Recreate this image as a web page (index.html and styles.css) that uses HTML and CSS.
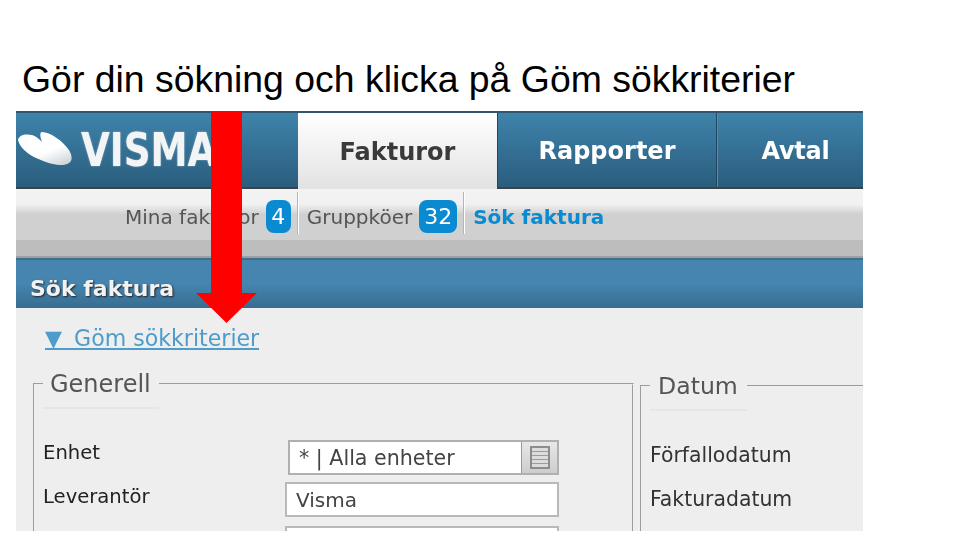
FILE: index.html
```html
<!DOCTYPE html>
<html lang="sv">
<head>
    <meta charset="UTF-8">
    <title>Gör din sökning</title>
    <link rel="stylesheet" href="styles.css">
</head>
<body>
    <h1 class="slide-title">Gör din sökning och klicka på Göm sökkriterier</h1>

    <div class="shot-wrap">
        <div class="shot">
            <div class="topbar">
                <div class="logo">
                    <svg class="logo-mark" width="56" height="40" viewBox="0 0 56 40">
                        <defs>
                            <linearGradient id="mark" x1="0.3" y1="0.2" x2="0.8" y2="1">
                                <stop offset="0.5" stop-color="#fff"/>
                                <stop offset="1" stop-color="#cfd6da"/>
                            </linearGradient>
                        </defs>
                        <path d="M1 10C2 5 8 3.5 15 5C22 7 30 17 34 23C30 19 25 14 24 9C23 5 23 2 25 2C33 2 46 11 52 20C55 25 56 31 52 33C46 37 34 35 19 28C11 24 3 18 1 10Z" fill="url(#mark)"/>
                    </svg>
                    <span class="logo-text">VISMA</span>
                </div>
                <div class="tab tab-active tab-fakturor">Fakturor</div>
                <div class="tab tab-rapporter">Rapporter</div>
                <div class="tab tab-avtal">Avtal</div>
            </div>

            <div class="subnav">
                <div class="subnav-item">Mina fakturor <span class="badge">4</span></div>
                <div class="subnav-item">Gruppköer <span class="badge">32</span></div>
                <div class="subnav-item current">Sök faktura</div>
            </div>
            <div class="band"></div>

            <div class="page-title">Sök faktura</div>

            <div class="content">
                <a class="toggle"><span class="toggle-mark">▼</span> Göm sökkriterier</a>
                <div class="columns">
                    <fieldset class="group group-general">
                        <legend>Generell</legend>
                        <div class="row row-first">
                            <label>Enhet</label>
                            <div class="picker">
                                <span class="picker-value">* | Alla enheter</span>
                                <span class="picker-btn">
                                    <svg width="20" height="23" viewBox="0 0 20 23">
                                        <rect x="1" y="1" width="18" height="21" fill="#dcdcdc" stroke="#8c8c8c" stroke-width="2"/>
                                        <path d="M2 5.5H18M2 9.5H18M2 13.5H18M2 17.5H18" stroke="#9a9a9a" stroke-width="1"/>
                                    </svg>
                                </span>
                            </div>
                        </div>
                        <div class="row">
                            <label>Leverantör</label>
                            <div class="field">Visma</div>
                        </div>
                        <div class="row">
                            <label></label>
                            <div class="field"></div>
                        </div>
                    </fieldset>
                    <fieldset class="group group-date">
                        <legend>Datum</legend>
                        <div class="date-row date-first">Förfallodatum</div>
                        <div class="date-row">Fakturadatum</div>
                    </fieldset>
                </div>
            </div>
        </div>

        <svg class="arrow" width="64" height="215" viewBox="0 0 64 215">
            <path d="M16 1H47V183H62L31.5 213L1 183H16Z" fill="#ff0000"/>
        </svg>
    </div>
</body>
</html>
```

FILE: styles.css
```css
body {
    margin: 0;
    background-color: #fff;
    font-family: "DejaVu Sans", sans-serif;
    overflow: hidden;
}
.slide-title {
    margin: 0;
    height: 111px;
    padding: 58px 0 0 22px;
    box-sizing: border-box;
    font-family: "Liberation Sans", sans-serif;
    font-size: 37.4px;
    line-height: 42px;
    font-weight: normal;
    color: #000;
}
.shot-wrap {
    position: relative;
    margin-left: 16px;
    width: 847px;
    height: 420px;
}
.shot {
    width: 847px;
    height: 420px;
    overflow: hidden;
    background-color: #eee;
    filter: blur(0.35px);
}

.topbar {
    display: flex;
    height: 78px;
    box-sizing: border-box;
    border-top: 2px solid #2f566e;
    border-bottom: 2px solid #3b4347;
    background: linear-gradient(#3f83aa, #2a5d7e);
}
.logo {
    display: flex;
    align-items: center;
    width: 282px;
    padding-left: 1px;
    box-sizing: border-box;
    overflow: hidden;
}
.logo-text {
    margin-left: 8px;
    font-family: "DejaVu Sans Condensed", "DejaVu Sans", sans-serif;
    font-size: 46px;
    line-height: 50px;
    font-weight: bold;
    color: #f2f4f5;
    text-shadow: 0 0 2px rgba(255, 255, 255, 0.5);
    transform: scaleX(0.9);
    transform-origin: left center;
}
.tab {
    display: flex;
    align-items: center;
    justify-content: center;
    padding-top: 2px;
    box-sizing: border-box;
    font-size: 24px;
    font-weight: bold;
    color: #fff;
}
.tab-active {
    margin-bottom: -2px;
    background: linear-gradient(#fff, #e2e2e2);
    color: #3a3a3a;
}
.tab-fakturor {
    width: 199px;
}
.tab-rapporter {
    width: 220px;
    border-left: 1px solid #24465c;
    border-right: 1px solid #24465c;
}
.tab-avtal {
    width: 146px;
    padding-left: 10px;
    border-left: 1px solid #4f8fb5;
    letter-spacing: -0.3px;
}

.subnav {
    display: flex;
    align-items: flex-start;
    height: 51px;
    padding: 3px 0 0 109px;
    box-sizing: border-box;
    background: linear-gradient(#f3f3f3 0, #f1f1f1 30%, #d0d0d0 50%, #d0d0d0 100%);
}
.subnav-item {
    display: flex;
    align-items: center;
    gap: 7px;
    height: 42px;
    padding: 7px 6px 0 0;
    margin-right: 9px;
    box-sizing: border-box;
    border-right: 1px solid #b5b5b5;
    box-shadow: 1px 0 0 #fff;
    font-size: 20px;
    color: #555;
    white-space: nowrap;
}
.subnav-item.current {
    border: 0;
    box-shadow: none;
    font-weight: bold;
    color: #0a8ad0;
}
.badge {
    display: inline-block;
    min-width: 15px;
    padding: 0 5px;
    border-radius: 8px;
    background-color: #0a8ad0;
    color: #fff;
    font-size: 22px;
    line-height: 33px;
    text-align: center;
}
.band {
    height: 18px;
    box-sizing: border-box;
    border-bottom: 2px solid #9f9f9f;
    background-color: #bdbdbd;
}

.page-title {
    height: 50px;
    padding-left: 14px;
    box-sizing: border-box;
    border-top: 2px solid #3f6f8e;
    background: linear-gradient(#4585b0 0, #4585b0 50%, #386c90 100%);
    font-size: 22px;
    line-height: 57px;
    font-weight: bold;
    color: #f2f2f2;
    text-shadow: 1px 1px 2px #222;
}

.content {
    padding: 20px 0 0 17px;
}
.toggle {
    display: block;
    width: fit-content;
    margin-left: 12px;
    font-size: 22.1px;
    line-height: 20px;
    color: #4d9ccb;
    border-bottom: 2px solid #4d9ccb;
    white-space: nowrap;
}
.toggle-mark {
    margin-right: 5px;
}
.columns {
    display: flex;
    align-items: flex-start;
    gap: 6px;
    margin-top: 9px;
}
.group {
    flex: none;
    margin: 0;
    min-width: 0;
    box-sizing: border-box;
    padding: 0 0 0 8px;
    border: 2px groove #f0f0f0;
    border-bottom: 0;
}
.group legend {
    box-sizing: border-box;
    padding: 11px 0 9px 7px;
    border-bottom: 2px solid #e6e6e6;
    font-size: 24px;
    line-height: 28px;
    color: #555;
}
.group-general {
    width: 601px;
    height: 200px;
}
.group-general legend {
    width: 116px;
}
.group-date {
    width: 240px;
    height: 200px;
    margin-top: 2px;
}
.group-date legend {
    width: 97px;
    padding-left: 8px;
    font-size: 23.6px;
}
.row {
    display: flex;
    align-items: flex-start;
    justify-content: space-between;
    width: 516px;
    height: 44px;
    font-size: 19.6px;
    line-height: 24px;
    color: #222;
}
.row-first {
    height: 42px;
    margin-top: 31px;
}
.row label {
    flex: none;
    margin-top: 3px;
}
.row-first label {
    margin-top: 1px;
}
.picker {
    display: flex;
    width: 271px;
    height: 35px;
    box-sizing: border-box;
    border: 2px solid #b0b0b0;
    background-color: #fff;
}
.picker-value {
    flex: 1;
    padding-left: 9px;
    line-height: 33px;
    font-size: 20.6px;
    color: #444;
}
.picker-btn {
    display: flex;
    align-items: center;
    justify-content: center;
    width: 35px;
    background: linear-gradient(#e8e8e8, #cdcdcd);
    border-left: 1px solid #999;
}
.field {
    width: 274px;
    height: 35px;
    padding-left: 9px;
    box-sizing: border-box;
    border: 2px solid #b9b9b9;
    background-color: #fff;
    font-size: 20px;
    line-height: 33px;
    color: #444;
}
.date-row {
    height: 44px;
    font-size: 20.4px;
    line-height: 24px;
    color: #333;
}
.date-first {
    margin-top: 32px;
}

.arrow {
    position: absolute;
    left: 179px;
    top: -1px;
}
```
